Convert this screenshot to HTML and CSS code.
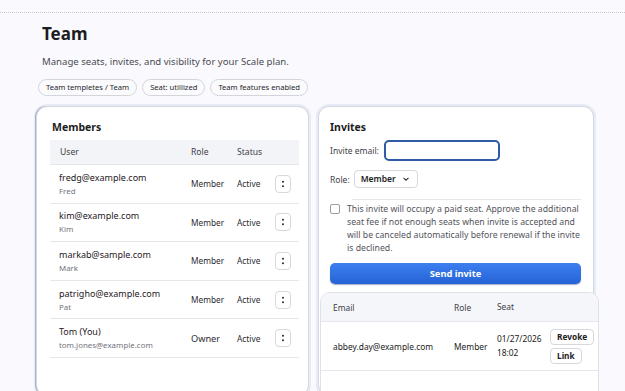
FILE: index.html
```html
<!DOCTYPE html>
<html lang="en">
<head>
    <meta charset="UTF-8">
    <meta name="viewport" content="width=device-width, initial-scale=1.0">
    <title>Team</title>
    <link rel="stylesheet" href="styles.css">
</head>
<body>
    <div class="topbar"></div>
    <div class="page">
        <h1>Team</h1>
        <p class="subtitle">Manage seats, invites, and visibility for your Scale plan.</p>
        <div class="pills">
            <span class="pill">Team templetes / Team</span>
            <span class="pill">Seat: utillized</span>
            <span class="pill">Team features enabled</span>
        </div>

        <div class="columns">
            <div class="card members">
                <h2>Members</h2>
                <table class="table">
                    <thead>
                        <tr>
                            <th class="col-user">User</th>
                            <th class="col-role">Role</th>
                            <th class="col-status">Status</th>
                            <th></th>
                        </tr>
                    </thead>
                    <tbody>
                        <tr>
                            <td><div class="email">fredg@example.com</div><div class="name">Fred</div></td>
                            <td>Member</td>
                            <td>Active</td>
                            <td><button class="kebab"><svg viewBox="0 0 16 18"><circle cx="8" cy="6.5" r="1.2"/><circle cx="8" cy="11.5" r="1.2"/></svg></button></td>
                        </tr>
                        <tr>
                            <td><div class="email">kim@example.com</div><div class="name">Kim</div></td>
                            <td>Member</td>
                            <td>Active</td>
                            <td><button class="kebab"><svg viewBox="0 0 16 18"><circle cx="8" cy="6.5" r="1.2"/><circle cx="8" cy="11.5" r="1.2"/></svg></button></td>
                        </tr>
                        <tr>
                            <td><div class="email">markab@sample.com</div><div class="name">Mark</div></td>
                            <td>Member</td>
                            <td>Active</td>
                            <td><button class="kebab"><svg viewBox="0 0 16 18"><circle cx="8" cy="6.5" r="1.2"/><circle cx="8" cy="11.5" r="1.2"/></svg></button></td>
                        </tr>
                        <tr>
                            <td><div class="email">patrigho@example.com</div><div class="name">Pat</div></td>
                            <td>Member</td>
                            <td>Active</td>
                            <td><button class="kebab"><svg viewBox="0 0 16 18"><circle cx="8" cy="6.5" r="1.2"/><circle cx="8" cy="11.5" r="1.2"/></svg></button></td>
                        </tr>
                        <tr>
                            <td><div class="email">Tom (You)</div><div class="name">tom.jones@example.com</div></td>
                            <td class="owner">Owner</td>
                            <td>Active</td>
                            <td><button class="kebab"><svg viewBox="0 0 16 18"><circle cx="8" cy="6.5" r="1.2"/><circle cx="8" cy="11.5" r="1.2"/></svg></button></td>
                        </tr>
                    </tbody>
                </table>
            </div>

            <div class="card invites">
                <h2>Invites</h2>
                <div class="field">
                    <label for="inviteEmail">Invite email:</label>
                    <input type="text" id="inviteEmail" class="email-input">
                </div>
                <div class="field">
                    <label>Role:</label>
                    <div class="select">Member <svg class="chev" viewBox="0 0 8 6"><path d="M1.5 1.8 L4 4.2 L6.5 1.8"/></svg></div>
                </div>
                <div class="divider"></div>
                <div class="notice">
                    <span class="checkbox"></span>
                    <p>This invite will occupy a paid seat. Approve the additional seat fee if not enough seats when invite is accepted and will be canceled automatically before renewal if the invite is declined.</p>
                </div>
                <button class="send">Send invite</button>

                <div class="invite-list">
                    <div class="list-head">
                        <span class="c-email">Email</span>
                        <span class="c-role">Role</span>
                        <span class="c-seat">Seat</span>
                    </div>
                    <div class="list-row">
                        <span class="c-email">abbey.day@example.com</span>
                        <span class="c-role">Member</span>
                        <span class="c-seat">01/27/2026<br>18:02</span>
                        <span class="c-actions">
                            <button class="small">Revoke</button>
                            <button class="small">Link</button>
                        </span>
                    </div>
                </div>
            </div>
        </div>
    </div>
</body>
</html>
```

FILE: styles.css
```css
body {
    margin: 0;
    font-family: "Noto Sans", Arial, sans-serif;
    background-color: #faf9fd;
    color: #222;
    overflow: hidden;
}

.topbar {
    height: 12px;
    border-bottom: 1px dotted #c9c9cf;
}

.page {
    padding: 9px 28px 0 36px;
}

h1 {
    margin: 0 0 0 6px;
    font-size: 17px;
    font-weight: 700;
    line-height: 24px;
    color: #1c1d22;
}

.subtitle {
    margin: 9px 0 0 6px;
    font-size: 9.6px;
    line-height: 14px;
    color: #4a4b52;
}

.pills {
    display: flex;
    gap: 5px;
    margin: 10px 0 0 2px;
}

.pill {
    box-sizing: border-box;
    padding: 0 7px;
    height: 17px;
    line-height: 15px;
    font-size: 7.6px;
    border: 1px solid #d3d5dc;
    border-radius: 9px;
    background-color: #fbfbfd;
    color: #26272c;
}

.columns {
    display: flex;
    gap: 9px;
    margin-top: 10px;
}

.card {
    background-color: #fff;
    border: 1px solid #d4d8e3;
    border-radius: 11px;
    box-shadow: 0 0 0 2px rgba(214, 219, 236, 0.5);
    height: 290px;
    box-sizing: border-box;
}

.card h2 {
    margin: 0;
    font-size: 10.5px;
    font-weight: 700;
    line-height: 16px;
    color: #1c1d22;
}

.members {
    width: 273px;
    box-shadow: -1px 0 0 #a9b3cf, 0 0 0 2px rgba(214, 219, 236, 0.5);
    padding: 12px 9px 0 13px;
}

.members h2 {
    margin-left: 2px;
}

.table {
    width: 100%;
    margin-top: 5px;
    border-collapse: collapse;
    font-size: 8.3px;
}

.table th {
    background-color: #f3f4f7;
    height: 24px;
    padding: 0;
    text-align: left;
    font-size: 8.6px;
    font-weight: 400;
    color: #3f4047;
    border-bottom: 1px solid #e6e7ec;
}

.table th.col-user {
    padding-left: 10px;
    width: 131px;
}

.col-role {
    width: 46px;
}

.table td {
    height: 37.6px;
    padding: 0;
    border-bottom: 1px solid #e6e7ec;
    color: #2b2c31;
}

.table td:first-child {
    padding-left: 9px;
}

.email {
    font-size: 9px;
    line-height: 12px;
    color: #1f2024;
}

.name {
    font-size: 7.9px;
    line-height: 10px;
    color: #73747b;
    margin-top: 2px;
}

.table td.owner {
    font-size: 9.2px;
}

.kebab {
    display: block;
    width: 16px;
    height: 18px;
    padding: 0;
    border: 1px solid #d6d8de;
    border-radius: 4px;
    background-color: #fff;
}

.kebab svg {
    display: block;
    width: 14px;
    height: 16px;
    fill: #333;
}

.invites {
    width: 276px;
    padding: 12px 0 0 11px;
    display: flex;
    flex-direction: column;
}

.field {
    display: flex;
    align-items: center;
    gap: 5px;
    font-size: 8.5px;
    color: #3f4047;
}

.invites h2 + .field {
    margin-top: 5px;
}

.email-input {
    width: 112px;
    height: 17px;
    padding: 0;
    border: 2px solid #2e5ba5;
    border-radius: 5px;
}

.field + .field {
    margin-top: 9px;
}

.field + .field label {
    margin-right: -1px;
}

.select {
    box-sizing: border-box;
    width: 64px;
    height: 18px;
    padding: 0 7px 0 6px;
    border: 1px solid #d6d8de;
    border-radius: 4px;
    font-size: 8.5px;
    font-weight: 600;
    line-height: 16px;
    color: #222;
    display: flex;
    align-items: center;
    justify-content: space-between;
}

.chev {
    width: 8px;
    height: 6px;
    fill: none;
    stroke: #333;
    stroke-width: 1.1;
}

.divider {
    margin: 11px 12px 0 22px;
    border-top: 1px solid #e6e7ec;
}

.notice {
    display: flex;
    gap: 7px;
    margin-top: 3px;
    padding-right: 8px;
}

.checkbox {
    flex: none;
    box-sizing: border-box;
    width: 10px;
    height: 10px;
    border: 1px solid #9c9ea6;
    border-radius: 2px;
    margin-top: 1px;
}

.notice p {
    margin: 0;
    font-size: 8.7px;
    line-height: 13px;
    color: #53545b;
}

.send {
    margin-top: 8px;
    width: 251px;
    height: 21px;
    border: none;
    border-radius: 5px;
    background: linear-gradient(#3c7ff0, #2563d6);
    color: #fff;
    font-family: inherit;
    font-size: 9.3px;
    font-weight: 700;
    box-shadow: 0 1px 1px rgba(20, 50, 120, 0.4);
}

.invite-list {
    margin: 8px -6px 0 -10px;
    background-color: #fff;
    border: 1px solid #dfe1e8;
    border-radius: 10px 10px 0 0;
    flex: 1;
    font-size: 8.4px;
}

.list-head,
.list-row {
    display: flex;
    align-items: center;
    padding-left: 12px;
    border-bottom: 1px solid #e6e7ec;
}

.list-head {
    height: 28px;
    background-color: #f5f6f9;
    border-radius: 10px 10px 0 0;
    color: #3f4047;
}

.list-row {
    height: 48px;
    color: #222;
}

.c-email { width: 121px; }
.c-role { width: 43px; }
.c-seat { width: 53px; line-height: 14px; }

.c-actions {
    display: flex;
    flex-direction: column;
    gap: 3px;
}

.small {
    align-self: flex-start;
    height: 16px;
    padding: 0 6px;
    border: 1px solid #d6d8de;
    border-radius: 4px;
    background-color: #fff;
    font-family: inherit;
    font-size: 8.3px;
    font-weight: 700;
    color: #222;
}
```
